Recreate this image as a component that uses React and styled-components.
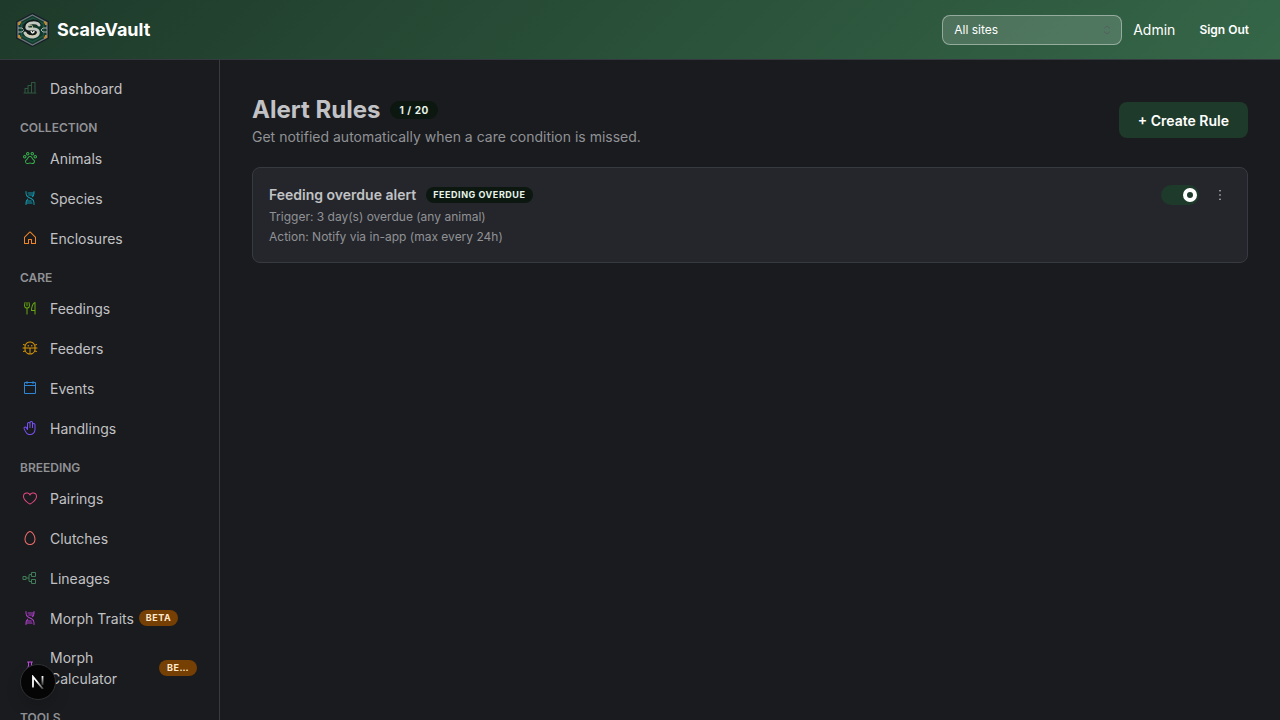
import React, { useState } from 'react';
import styled, { createGlobalStyle } from 'styled-components';
import {
    PiBug,
    PiCalendarBlank,
    PiChartBar,
    PiDna,
    PiDotsThreeVertical,
    PiEgg,
    PiFlask,
    PiForkKnife,
    PiHand,
    PiHeart,
    PiHouse,
    PiPawPrint,
    PiTreeStructure
} from 'react-icons/pi';

const GlobalStyle = createGlobalStyle`
    * {
        box-sizing: border-box;
    }
    body {
        margin: 0;
        background: #1a1b1e;
        color: #c1c2c5;
        font-family: Inter, 'Open Sans', sans-serif;
        font-size: 14px;
        line-height: 21px;
    }
    button, select {
        font-family: inherit;
    }
`;

const Shell = styled.div`
    display: flex;
    flex-direction: column;
    height: 100vh;
`;

const Header = styled.header`
    display: flex;
    flex: none;
    align-items: center;
    justify-content: space-between;
    height: 60px;
    padding: 0 16px;
    border-bottom: 1px solid #373a40;
    background: linear-gradient(135deg, #1e3a2a 0%, #356648 100%);
    color: #fff;
`;

const Brand = styled.a`
    display: flex;
    align-items: center;
    gap: 8px;
    color: #fff;
    font-size: 18px;
    font-weight: 700;
    line-height: 22px;
    text-decoration: none;
`;

const HeaderActions = styled.div`
    display: flex;
    align-items: center;
    gap: 11px;
    line-height: 20px;
`;

const SelectWrap = styled.div`
    position: relative;
    width: 180px;
    height: 30px;
    svg {
        position: absolute;
        top: 9px;
        right: 9px;
        pointer-events: none;
    }
`;

const SiteSelect = styled.select`
    width: 100%;
    height: 100%;
    padding: 0 30px 0 11px;
    border: 1px solid rgba(255, 255, 255, 0.4);
    border-radius: 8px;
    appearance: none;
    background: rgba(255, 255, 255, 0.15);
    color: #fff;
    font-size: 12px;
    option {
        color: #000;
    }
`;

const SignOut = styled.button`
    height: 30px;
    margin-left: 3px;
    padding: 0 15px 0 10px;
    border: 0;
    background: none;
    color: #fff;
    font-size: 12px;
    font-weight: 600;
    cursor: pointer;
`;

const Body = styled.div`
    display: flex;
    flex: 1;
    min-height: 0;
`;

const Sidebar = styled.nav`
    flex: none;
    width: 220px;
    padding: 9px 8px;
    border-right: 1px solid #373a40;
    overflow-y: auto;
    scrollbar-width: none;
`;

const NavHeading = styled.div`
    height: 30px;
    padding: 8px 12px 0;
    color: #909296;
    font-size: 12px;
    font-weight: 600;
    text-transform: uppercase;
`;

const NavLink = styled.a`
    display: flex;
    align-items: center;
    min-height: 38px;
    margin-bottom: 2px;
    padding: 8px 14px;
    color: #c1c2c5;
    text-decoration: none;
    > svg {
        flex: none;
        margin-right: 12px;
        color: ${props => props.$tint};
    }
    > span:first-of-type {
        flex: ${props => props.$wrap ? '1' : 'none'};
    }
`;

const Beta = styled.span`
    flex: none;
    width: ${props => props.$clipped ? '38px' : '39px'};
    height: 16px;
    margin-left: 5px;
    border-radius: 8px;
    overflow: hidden;
    background: #763f03;
    color: #ffe8cc;
    font-size: 9px;
    font-weight: 700;
    line-height: 16px;
    letter-spacing: 0.06em;
    text-align: center;
`;

const Main = styled.main`
    flex: 1;
    min-width: 0;
    padding: 33px 32px;
`;

const PageHeader = styled.div`
    display: flex;
    align-items: center;
    justify-content: space-between;
    margin-bottom: 20px;
`;

const TitleRow = styled.div`
    display: flex;
    align-items: center;
    gap: 10px;
`;

const Title = styled.h1`
    margin: 0;
    font-size: 24px;
    font-weight: 700;
    line-height: 34px;
`;

const Badge = styled.span`
    height: ${props => props.$small ? '16px' : '18px'};
    padding: 0 ${props => props.$small ? '7px' : '9px'};
    border-radius: 9px;
    background: #0c1710;
    color: #e6f4ea;
    font-size: ${props => props.$small ? '9px' : '10px'};
    font-weight: 700;
    line-height: ${props => props.$small ? '16px' : '18px'};
    letter-spacing: 0.06em;
    text-transform: uppercase;
`;

const Subtitle = styled.p`
    margin: 0;
    color: #909296;
    line-height: 20px;
`;

const CreateButton = styled.button`
    height: 36px;
    padding: 0 19px;
    border: 0;
    border-radius: 8px;
    background: #1e3a2a;
    color: #fff;
    font-size: 14px;
    font-weight: 600;
    cursor: pointer;
`;

const RuleCard = styled.article`
    display: flex;
    align-items: flex-start;
    justify-content: space-between;
    padding: 16px 16px 15px;
    border: 1px solid #373a40;
    border-radius: 8px;
    background: #25262b;
`;

const RuleName = styled.h2`
    margin: 0;
    font-size: 14px;
    font-weight: 600;
    line-height: 20px;
`;

const RuleDetail = styled.p`
    margin: 0;
    color: #909296;
    font-size: 12px;
    line-height: 20px;
`;

const RuleText = styled.div`
    ${TitleRow} {
        height: 21px;
        margin-bottom: 2px;
    }
`;

const RuleActions = styled.div`
    display: flex;
    align-items: center;
    gap: 10px;
`;

const Switch = styled.input`
    display: flex;
    align-items: center;
    width: 38px;
    height: 20px;
    margin: 0;
    padding: 0 2px;
    border-radius: 10px;
    appearance: none;
    background: ${props => props.checked ? '#1e3a2a' : '#373a40'};
    cursor: pointer;
    &::before {
        content: '';
        box-sizing: border-box;
        flex: none;
        width: 14px;
        height: 14px;
        margin-left: ${props => props.checked ? '20px' : '0'};
        border: 4px solid #fff;
        border-radius: 50%;
    }
`;

const MenuButton = styled.button`
    display: flex;
    align-items: center;
    justify-content: center;
    width: 22px;
    height: 22px;
    padding: 0;
    border: 0;
    background: none;
    color: #e3e4e6;
    cursor: pointer;
`;

const DevBadge = styled.button`
    position: fixed;
    bottom: 20px;
    left: 20px;
    display: flex;
    align-items: center;
    justify-content: center;
    width: 36px;
    height: 36px;
    padding: 0;
    border: 1px solid #303134;
    border-radius: 50%;
    background: #050505;
    box-shadow: 0 8px 16px rgba(0, 0, 0, 0.14);
`;

const sections = [
    { items: [{ label: 'Dashboard', icon: PiChartBar, tint: '#2d5a3f' }] },
    {
        title: 'Collection',
        items: [
            { label: 'Animals', icon: PiPawPrint, tint: '#37b24d' },
            { label: 'Species', icon: PiDna, tint: '#1098ad' },
            { label: 'Enclosures', icon: PiHouse, tint: '#f08724' }
        ]
    },
    {
        title: 'Care',
        items: [
            { label: 'Feedings', icon: PiForkKnife, tint: '#66a80f' },
            { label: 'Feeders', icon: PiBug, tint: '#d69405' },
            { label: 'Events', icon: PiCalendarBlank, tint: '#2f86d6' },
            { label: 'Handlings', icon: PiHand, tint: '#7950f2' }
        ]
    },
    {
        title: 'Breeding',
        items: [
            { label: 'Pairings', icon: PiHeart, tint: '#e64980' },
            { label: 'Clutches', icon: PiEgg, tint: '#f26d6d' },
            { label: 'Lineages', icon: PiTreeStructure, tint: '#3f7d58' },
            { label: 'Morph Traits', icon: PiDna, tint: '#ae3ec9', beta: 'BETA' },
            { label: 'Morph Calculator', icon: PiFlask, tint: '#be4bdb', beta: 'BE…', wrap: true }
        ]
    },
    { title: 'Tools', items: [] }
];

const Logo = () => (
    <svg width="33" height="34" viewBox="0 0 33 34" fill="none" aria-hidden="true">
        <path d="M16.500 1 32 9.200V24.800L16.500 33 1 24.800V9.200Z" fill="#14211f" stroke="#17202a" strokeWidth="2" />
        <path d="M16.500 2 31 9.700V24.300L16.500 32 2 24.300V9.700Z" fill="#12382c" stroke="#6d7678" strokeWidth="1.300" />
        <path d="M16.500 5 27.500 11V23L16.500 29 5.500 23V11Z" stroke="#1f5341" strokeWidth="1.500" />
        <path d="M2 15H6L8 17 6 19H2M31 15H27L25 17 27 19H31" stroke="#a7b1ad" />
        <path d="M3 12V10L5 9M30 12V10L28 9M3 22V24L5 25M30 22V24L28 25" stroke="#bd8b35" strokeWidth="2" />
        <path d="M23 12C21 8 12 8 10 13C8 18 14 18 17 18C21 18 21 21 17 21C14 21 12 20 10 19" stroke="#101917" strokeWidth="5" />
        <path d="M23 12C21 9 12 9 11 13C10 17 15 16 18 16C24 16 24 23 17 24C12 24 10 22 9 20" stroke="#c4c8c3" strokeWidth="3" strokeLinecap="round" />
        <path d="M13 13C17 10 18 16 14 16M10 21C14 24 20 24 22 20" stroke="#e0d4a4" strokeWidth="1" />
        <path d="M15 18C16 21 18 20 18 18" stroke="#eef1ec" strokeWidth="1.500" />
    </svg>
);

const Selector = () => (
    <svg width="12" height="12" viewBox="0 0 12 12" fill="none" stroke="#55605f" aria-hidden="true">
        <path d="M3 4.500 6 2 9 4.500M3 7.500 6 10 9 7.500" />
    </svg>
);

const NextMark = () => (
    <svg width="14" height="14" viewBox="0 0 14 14" fill="none" strokeWidth="1.800" aria-hidden="true">
        <defs>
            <linearGradient id="stem" x1="0" y1="1" x2="0" y2="12" gradientUnits="userSpaceOnUse">
                <stop stopColor="#fff" />
                <stop offset="1" stopColor="#fff" stopOpacity="0" />
            </linearGradient>
            <linearGradient id="slash" x1="6" y1="6" x2="13" y2="14" gradientUnits="userSpaceOnUse">
                <stop stopColor="#fff" />
                <stop offset="1" stopColor="#fff" stopOpacity="0.2" />
            </linearGradient>
        </defs>
        <path d="M2 12.500V1.800L12 14" stroke="url(#slash)" />
        <path d="M11.500 1V10" stroke="url(#stem)" />
    </svg>
);

const App = () => {
    const [enabled, setEnabled] = useState(true);

    return (
        <>
            <GlobalStyle />
            <Shell>
                <Header>
                    <Brand href="#home">
                        <Logo />
                        ScaleVault
                    </Brand>
                    <HeaderActions>
                        <SelectWrap>
                            <SiteSelect aria-label="Site" defaultValue="all">
                                <option value="all">All sites</option>
                            </SiteSelect>
                            <Selector />
                        </SelectWrap>
                        <span>Admin</span>
                        <SignOut type="button">Sign Out</SignOut>
                    </HeaderActions>
                </Header>
                <Body>
                    <Sidebar>
                        {sections.map(({ title, items }) => (
                            <React.Fragment key={title || 'home'}>
                                {title && <NavHeading>{title}</NavHeading>}
                                {items.map(({ label, icon: Icon, tint, beta, wrap }) => (
                                    <NavLink key={label} href={`#${label}`} $tint={tint} $wrap={wrap}>
                                        <Icon size={16} />
                                        <span>{label}</span>
                                        {beta && <Beta $clipped={wrap}>{beta}</Beta>}
                                    </NavLink>
                                ))}
                            </React.Fragment>
                        ))}
                    </Sidebar>
                    <Main>
                        <PageHeader>
                            <div>
                                <TitleRow>
                                    <Title>Alert Rules</Title>
                                    <Badge>1 / 20</Badge>
                                </TitleRow>
                                <Subtitle>Get notified automatically when a care condition is missed.</Subtitle>
                            </div>
                            <CreateButton type="button">+ Create Rule</CreateButton>
                        </PageHeader>
                        <RuleCard>
                            <RuleText>
                                <TitleRow>
                                    <RuleName>Feeding overdue alert</RuleName>
                                    <Badge $small>Feeding overdue</Badge>
                                </TitleRow>
                                <RuleDetail>Trigger: 3 day(s) overdue (any animal)</RuleDetail>
                                <RuleDetail>Action: Notify via in-app (max every 24h)</RuleDetail>
                            </RuleText>
                            <RuleActions>
                                <Switch
                                    type="checkbox"
                                    role="switch"
                                    aria-label="Rule enabled"
                                    checked={enabled}
                                    onChange={() => setEnabled(!enabled)}
                                />
                                <MenuButton type="button" aria-label="Rule menu">
                                    <PiDotsThreeVertical size={16} />
                                </MenuButton>
                            </RuleActions>
                        </RuleCard>
                    </Main>
                </Body>
            </Shell>
            <DevBadge type="button" aria-label="Open dev tools">
                <NextMark />
            </DevBadge>
        </>
    );
};

export default App;
